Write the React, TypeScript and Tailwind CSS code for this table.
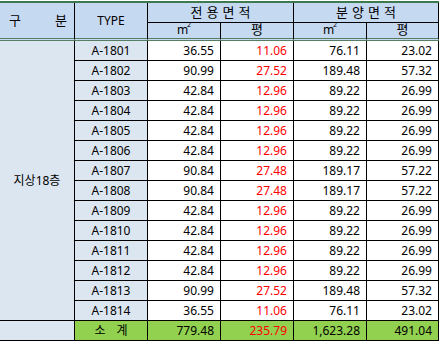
import React from "react";

type Row = { type: string; a: string; b: string; c: string; d: string };

const rows: Row[] = [
    { type: "A-1801", a: "36.55", b: "11.06", c: "76.11", d: "23.02" },
    { type: "A-1802", a: "90.99", b: "27.52", c: "189.48", d: "57.32" },
    { type: "A-1803", a: "42.84", b: "12.96", c: "89.22", d: "26.99" },
    { type: "A-1804", a: "42.84", b: "12.96", c: "89.22", d: "26.99" },
    { type: "A-1805", a: "42.84", b: "12.96", c: "89.22", d: "26.99" },
    { type: "A-1806", a: "42.84", b: "12.96", c: "89.22", d: "26.99" },
    { type: "A-1807", a: "90.84", b: "27.48", c: "189.17", d: "57.22" },
    { type: "A-1808", a: "90.84", b: "27.48", c: "189.17", d: "57.22" },
    { type: "A-1809", a: "42.84", b: "12.96", c: "89.22", d: "26.99" },
    { type: "A-1810", a: "42.84", b: "12.96", c: "89.22", d: "26.99" },
    { type: "A-1811", a: "42.84", b: "12.96", c: "89.22", d: "26.99" },
    { type: "A-1812", a: "42.84", b: "12.96", c: "89.22", d: "26.99" },
    { type: "A-1813", a: "90.99", b: "27.52", c: "189.48", d: "57.32" },
    { type: "A-1814", a: "36.55", b: "11.06", c: "76.11", d: "23.02" },
];

const cell = "border-r border-b border-black flex items-center";
const num = `${cell} justify-end pr-[6px] bg-white`;
// header cells sitting on the double line
const head2 = "bg-[#c5d9f1] border-r border-black border-b-[3px] border-b-[#557e62] border-double flex items-center";

const Spaced = ({ text }: { text: string }) => (
    <div className="flex gap-[4px] text-[13px]">
        {text.split("").map((ch, i) => (
            <span key={i}>{ch}</span>
        ))}
    </div>
);

const M2 = () => (
    <span className="relative pr-[3px]">
        m<span className="absolute right-0 -top-[1px] text-[7px]">2</span>
    </span>
);

export default function App() {
    return (
        <div className="bg-white w-[441px] h-[342px] pt-[1px] text-[12px] text-black" style={{ fontFamily: '"Noto Sans", "Noto Sans CJK KR", sans-serif' }}>
            <div className="grid grid-cols-[75px_73px_73px_73px_73px_72px] grid-rows-[20px_18px] auto-rows-[20px] border-t-2 border-[#3d7a4f] w-[439px]">
                {/* header */}
                <div className={`${head2} row-span-2 justify-between pl-[9px] pr-[7px] text-[13px]`}>
                    <span>구</span>
                    <span>분</span>
                </div>
                <div className={`${head2} row-span-2 justify-center`}>TYPE</div>
                <div className={`${cell} col-span-2 bg-[#c5d9f1] justify-center`}>
                    <Spaced text="전용면적" />
                </div>
                <div className={`${cell} col-span-2 bg-[#c5d9f1] justify-center`}>
                    <Spaced text="분양면적" />
                </div>
                <div className={`${head2} justify-center pb-[1px]`}><M2 /></div>
                <div className={`${head2} justify-center pb-[1px] text-[13px]`}>평</div>
                <div className={`${head2} justify-center pb-[1px]`}><M2 /></div>
                <div className={`${head2} justify-center pb-[1px] text-[13px]`}>평</div>

                {/* body */}
                <div className={`${cell} row-span-14 bg-[#dce6f1] justify-center`}>지상18층</div>
                {rows.map((r) => (
                    <React.Fragment key={r.type}>
                        <div className={`${cell} bg-[#dce6f1] justify-center`}>{r.type}</div>
                        <div className={num}>{r.a}</div>
                        <div className={`${num} text-[#ff0000]`}>{r.b}</div>
                        <div className={num}>{r.c}</div>
                        <div className={num}>{r.d}</div>
                    </React.Fragment>
                ))}

                {/* subtotal */}
                <div className={`${cell} bg-[#dce6f1]`} />
                <div className={`${cell} bg-[#92d050] justify-center gap-[11px]`}>
                    <span>소</span>
                    <span>계</span>
                </div>
                <div className={`${cell} bg-[#92d050] justify-end pr-[6px]`}>779.48</div>
                <div className={`${cell} bg-[#92d050] justify-end pr-[6px] text-[#ff0000]`}>235.79</div>
                <div className={`${cell} bg-[#92d050] justify-end pr-[6px]`}>1,623.28</div>
                <div className={`${cell} bg-[#92d050] justify-end pr-[6px]`}>491.04</div>
            </div>
        </div>
    );
}
